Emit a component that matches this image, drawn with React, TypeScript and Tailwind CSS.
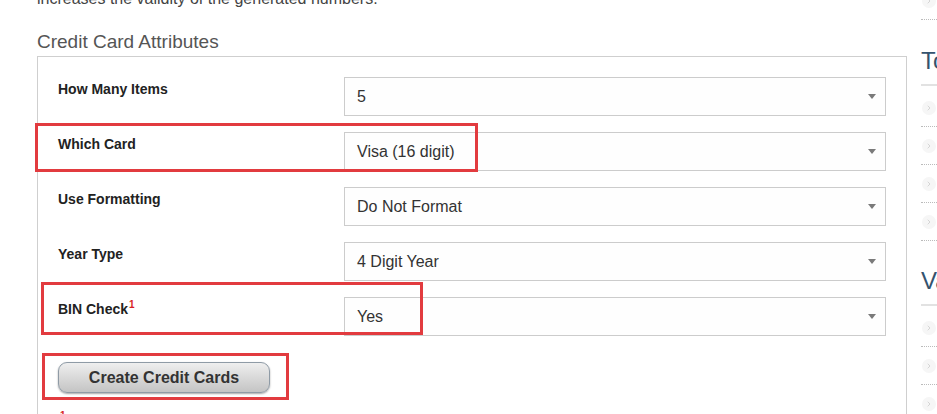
import { ChevronRight } from 'lucide-react';

const rows = [
    { label: 'How Many Items', value: '5' },
    { label: 'Which Card', value: 'Visa (16 digit)', mark: 'card' },
    { label: 'Use Formatting', value: 'Do Not Format' },
    { label: 'Year Type', value: '4 Digit Year' },
    { label: 'BIN Check', value: 'Yes', note: true, mark: 'bin' },
];

function SideItem({ last }: { last?: boolean }) {
    return (
        <div className={`h-[38px] flex items-center pl-[1px] ${last ? '' : 'border-b border-dotted border-[#bbb]'}`}>
            <span className="w-[14px] h-[14px] rounded-full bg-[#f6f6f6] flex items-center justify-center">
                <ChevronRight className="w-[8px] h-[8px] text-[#c4c4c4]" strokeWidth={2} />
            </span>
        </div>
    );
}

function SideBlock({ title, count }: { title: string; count: number }) {
    return (
        <div>
            <h3 className="text-[24px] leading-[30px] text-[#34536e]">{title}</h3>
            <div className="mt-[8px] h-[2px] bg-[#e2e2e2]" />
            <div className="mt-[3px]">
                {Array.from({ length: count }).map((_, i) => (
                    <SideItem key={i} />
                ))}
            </div>
        </div>
    );
}

export default function App() {
    return (
        <div className="w-[937px] h-[414px] overflow-hidden flex bg-white font-['Liberation_Sans',Arial,sans-serif]">
            {/* Main form column */}
            <div className="w-[907px] shrink-0 pl-[37px]">
                <p className="mt-[-12px] text-[16px] leading-[22px] text-[#444]">
                    increases the validity of the generated numbers.
                </p>
                <h2 className="mt-[21px] text-[19px] leading-[22px] text-[#555]">Credit Card Attributes</h2>

                <div className="mt-[3px] border border-[#cfcfcf] px-[20px] pt-[20px] pb-[40px]">
                    <div className="flex flex-col gap-[16px]">
                        {rows.map((row) => (
                            <div key={row.label} className="relative flex">
                                <div className="w-[286px] pt-[2px] text-[14px] leading-[20px] font-bold text-[#222]">
                                    {row.label}
                                    {row.note && (
                                        <sup className="text-[10px] text-[#d81f26] font-bold relative top-[-6px] ml-[1px]">1</sup>
                                    )}
                                </div>
                                <div className="w-[542px] h-[39px] border border-[#cccccc] bg-[#fefefe] flex items-center justify-between pl-[12px] pr-[9px]">
                                    <span className="text-[16px] text-[#333]">{row.value}</span>
                                    <span className="w-0 h-0 border-l-[4px] border-r-[4px] border-t-[5px] border-l-transparent border-r-transparent border-t-[#7a7a7a]" />
                                </div>
                                {row.mark === 'card' && (
                                    <div className="absolute left-[-23px] top-[-9px] w-[443px] h-[49px] border-[3px] border-[#e23b3f]" />
                                )}
                                {row.mark === 'bin' && (
                                    <div className="absolute left-[-17px] top-[-15px] w-[382px] h-[53px] border-[3px] border-[#e23b3f]" />
                                )}
                            </div>
                        ))}
                    </div>

                    <div className="relative mt-[26px] w-[212px]">
                        <button className="w-[212px] h-[31px] rounded-[9px] border border-[#8f9ba6] bg-linear-to-b from-[#efefef] to-[#c4c4c4] shadow-[0_1px_2px_rgba(0,0,0,0.35)] text-[16px] font-bold text-[#333]">
                            Create Credit Cards
                        </button>
                        <div className="absolute left-[-16px] top-[-9px] w-[247px] h-[47px] border-[3px] border-[#e23b3f]" />
                    </div>

                    <p className="mt-[18px] ml-[2px] text-[10px] leading-[10px] font-bold text-[#d81f26]">1</p>
                </div>
            </div>

            {/* Sidebar */}
            <div className="pl-[14px] overflow-hidden">
                <div className="w-[200px] mt-[-18px]">
                    <SideItem />
                    <div className="mt-[26px]">
                        <SideBlock title="Tools" count={4} />
                    </div>
                    <div className="mt-[25px]">
                        <SideBlock title="Validators" count={3} />
                    </div>
                </div>
            </div>
        </div>
    );
}
